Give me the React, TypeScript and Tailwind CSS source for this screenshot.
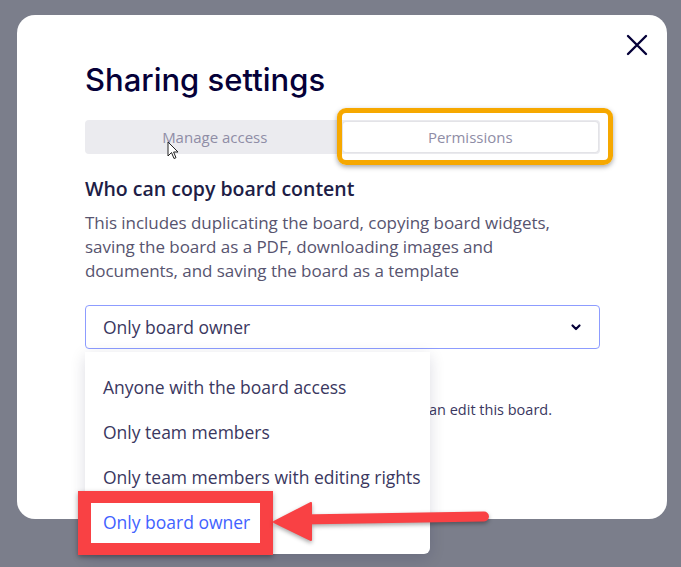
import React from "react";

const body = { fontFamily: '"Open Sans", "Liberation Sans", sans-serif' };
const head = { fontFamily: 'Inter, "Open Sans", sans-serif' };

export default function App() {
  const options = [
    "Anyone with the board access",
    "Only team members",
    "Only team members with editing rights",
    "Only board owner",
  ];
  return (
    <div className="relative w-[681px] h-[567px] overflow-hidden bg-[#7b7e8b] pt-[15px] pl-[17px]" style={body}>
      <div className="relative w-[650px] h-[504px] rounded-[18px] bg-white pl-[68px] pr-[67px] pt-[46px]">
        <button className="absolute left-[609px] top-[19px] w-[22px] h-[22px] text-[#050038]">
          <svg viewBox="0 0 22 22" width="22" height="22" fill="none" stroke="currentColor" strokeWidth="2.4" strokeLinecap="round">
            <path d="M2 2 L20 20 M20 2 L2 20" />
          </svg>
        </button>
        <h1 className="text-[31px] leading-[38px] font-medium text-[#050038]" style={head}>
          Sharing settings
        </h1>
        <div className="mt-[21px] flex h-[34px] rounded-[4px] bg-[#ebebef] p-[2px]">
          <div className="flex-1 flex items-center justify-center text-[15px] text-[#8f8da6]">Manage access</div>
          <div className="flex-1 flex items-center justify-center rounded-[3px] bg-white text-[15px] text-[#8f8da6] shadow-[0_0_2px_rgba(0,0,0,0.12)]">
            Permissions
          </div>
        </div>
        <h2 className="mt-[22px] text-[19.5px] leading-[26px] font-semibold text-[#201d46]">Who can copy board content</h2>
        <p className="mt-[9px] text-[17px] leading-[24px] text-[#57546f] w-[480px] tracking-[-0.05px]">
          This includes duplicating the board, copying board widgets, saving the board as a PDF, downloading images and documents, and saving the board as a template
        </p>
        <div className="mt-[22px] flex h-[44px] items-center justify-between rounded-[4px] border border-[#8d9cff] px-[17px] text-[17.5px] text-[#3a3760]">
          <span>Only board owner</span>
          <svg width="12" height="12" viewBox="0 0 12 12" fill="none" stroke="#050038" strokeWidth="2.2" strokeLinecap="round" strokeLinejoin="round">
            <path d="M2.5 4.5 L6 8 L9.5 4.5" />
          </svg>
        </div>
        <p className="mt-[51px] text-right pr-[48px] text-[14.5px] leading-[20px] text-[#3a3760]">
          People who can edit this board.
        </p>

        {/* dropdown menu */}
        <div className="absolute left-[68px] top-[337px] w-[345px] h-[202px] rounded-b-[6px] bg-white pt-[13px] shadow-[0_4px_16px_rgba(5,0,56,0.14)]">
          {options.map((o, i) => (
            <div
              key={o}
              className={
                i === 3
                  ? "h-[45px] flex items-center pl-[18px] text-[17.5px] text-[#4262ff]"
                  : "h-[45px] flex items-center pl-[18px] text-[17.5px] text-[#3a3760]"
              }
            >
              {o}
            </div>
          ))}
        </div>

        {/* orange highlight */}
        <div className="absolute left-[320px] top-[93px] w-[276px] h-[57px] rounded-[9px] border-[5px] border-[#f6a800] shadow-[0_2px_5px_rgba(0,0,0,0.35)]" />
      </div>

      {/* cursor */}
      <svg className="absolute left-[167px] top-[141px]" width="12" height="19" viewBox="0 0 12 19">
        <path d="M1 1 L1 15 L4.5 11.5 L7 17.5 L9 16.7 L6.6 11 L11 11 Z" fill="white" stroke="#222" strokeWidth="1" strokeLinejoin="round" />
      </svg>

      {/* red annotation box */}
      <div className="absolute left-[78px] top-[491px] w-[195px] h-[64px] border-x-[13px] border-y-[12px] border-[#f94144] shadow-[0_2px_5px_rgba(0,0,0,0.35)]" />

      {/* red arrow */}
      <svg className="absolute left-0 top-0" width="681" height="567" viewBox="0 0 681 567" style={{ filter: "drop-shadow(0 2px 2px rgba(0,0,0,0.35))" }}>
        <path d="M300 519.5 L484 516.5" stroke="#f94144" strokeWidth="10" strokeLinecap="round" />
        <path d="M274 522 L311 503 L311 540 Z" fill="#f94144" stroke="#f94144" strokeWidth="2" strokeLinejoin="round" />
      </svg>
    </div>
  );
}
